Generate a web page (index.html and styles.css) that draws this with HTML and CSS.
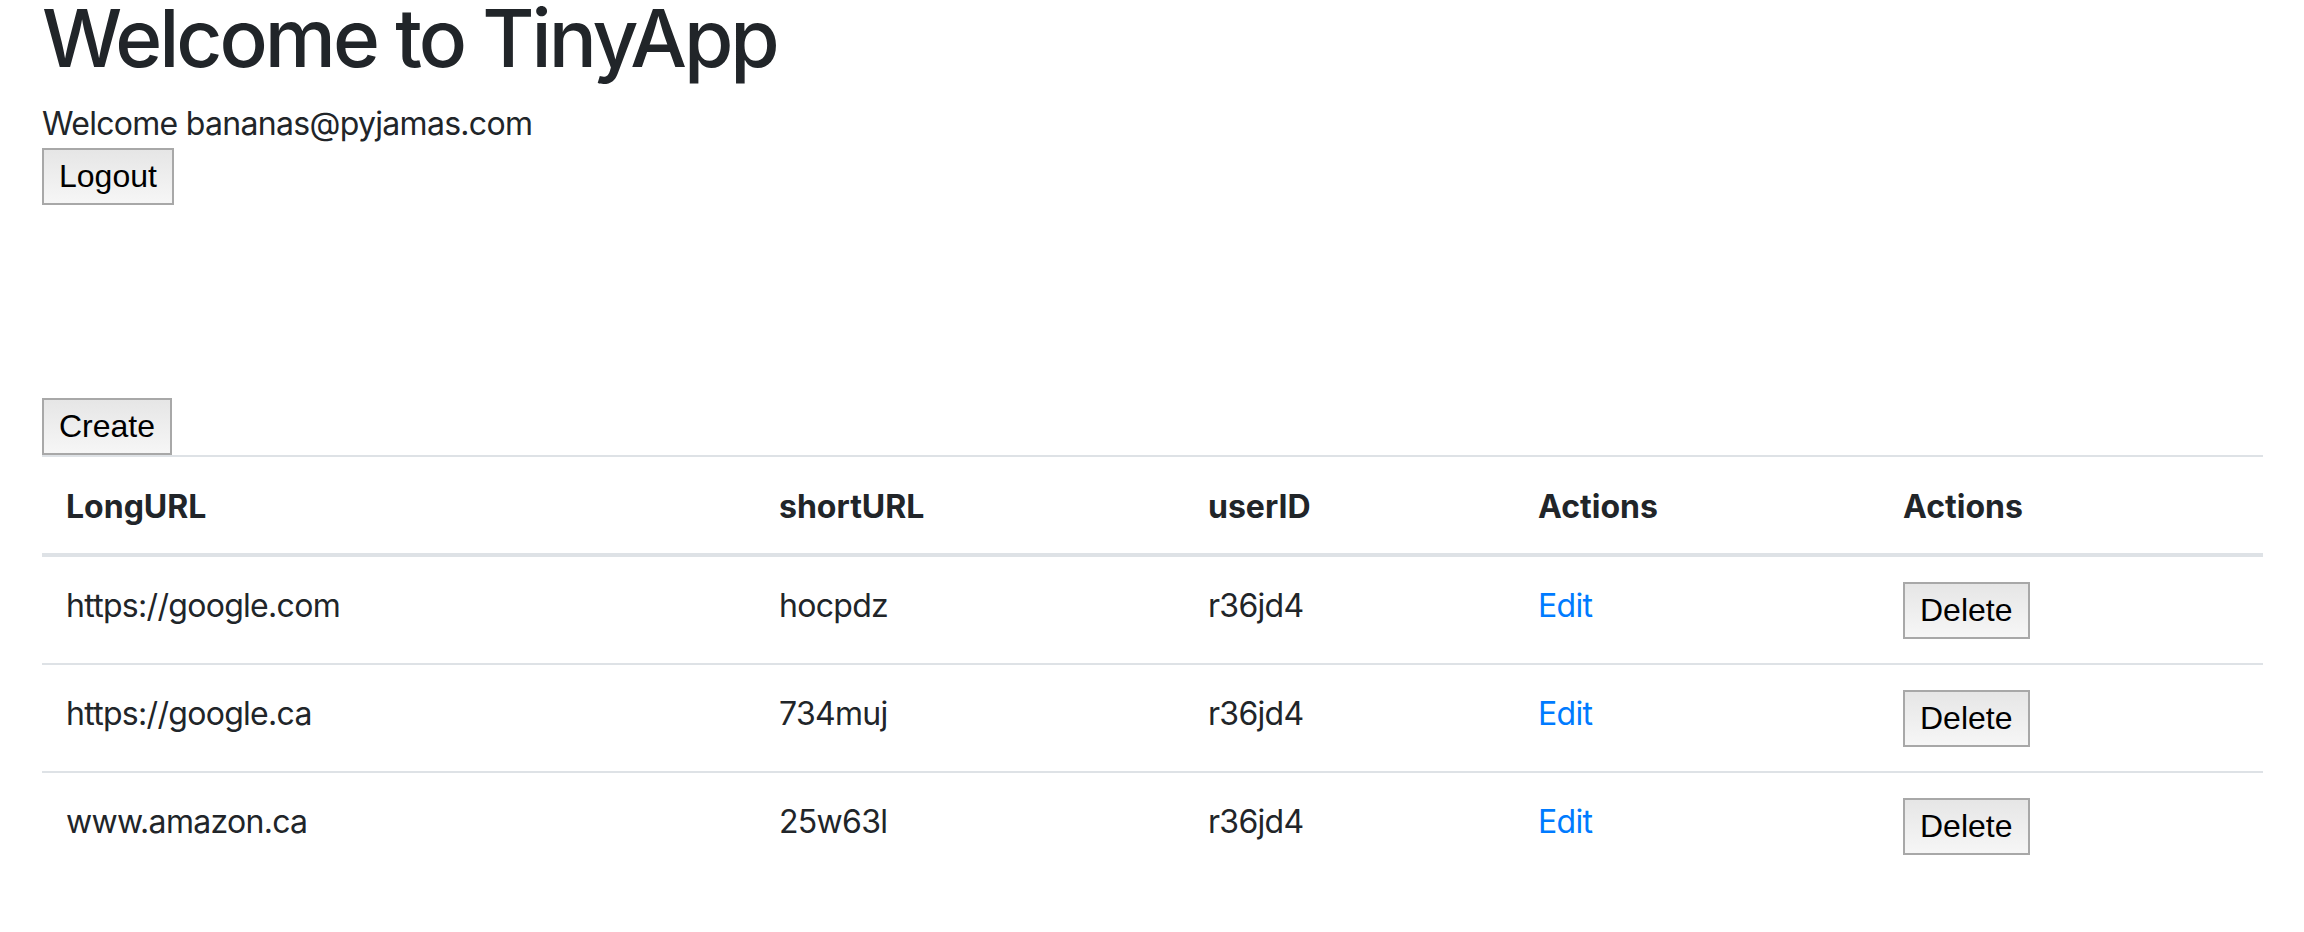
FILE: index.html
```html
<!DOCTYPE html>
<html lang="en">
<head>
<meta charset="utf-8">
<title>TinyApp</title>
<link rel="stylesheet" href="styles.css">
</head>
<body>
<main class="page">
  <h1 class="title">Welcome to TinyApp</h1>
  <div class="user">
    <div class="user-line">Welcome bananas@pyjamas.com</div>
    <button class="btn" type="button">Logout</button>
  </div>
  <div class="create">
    <button class="btn" type="button">Create</button>
  </div>
  <table class="urls">
    <colgroup>
      <col class="c-long">
      <col class="c-short">
      <col class="c-user">
      <col class="c-edit">
      <col class="c-del">
    </colgroup>
    <thead>
      <tr>
        <th>LongURL</th>
        <th>shortURL</th>
        <th>userID</th>
        <th>Actions</th>
        <th>Actions</th>
      </tr>
    </thead>
    <tbody>
      <tr>
        <td>https://google.com</td>
        <td>hocpdz</td>
        <td>r36jd4</td>
        <td><a class="link" href="#">Edit</a></td>
        <td><button class="btn" type="button">Delete</button></td>
      </tr>
      <tr>
        <td>https://google.ca</td>
        <td>734muj</td>
        <td>r36jd4</td>
        <td><a class="link" href="#">Edit</a></td>
        <td><button class="btn" type="button">Delete</button></td>
      </tr>
      <tr>
        <td>www.amazon.ca</td>
        <td>25w63l</td>
        <td>r36jd4</td>
        <td><a class="link" href="#">Edit</a></td>
        <td><button class="btn" type="button">Delete</button></td>
      </tr>
    </tbody>
  </table>
</main>
</body>
</html>
```
FILE: styles.css
```css
html, body {
  margin: 0;
  padding: 0;
  background: #ffffff;
}

body {
  font-family: Inter, "Noto Sans", sans-serif;
  font-size: 32px;
  line-height: 48px;
  letter-spacing: -0.7px;
  color: #212529;
}

.page {
  padding: 2px 41px 0 42px;
}

.title {
  margin: 0 0 26px;
  font-size: 80px;
  line-height: 72px;
  font-weight: 500;
  letter-spacing: -3px;
}

.user-line {
  height: 48px;
}

.btn {
  display: inline-block;
  margin: 0;
  padding: 2px 15px;
  border: 2px solid #a8a8a8;
  border-radius: 0;
  background: linear-gradient(#e6e6e6, #f6f6f6);
  font-family: "Liberation Sans", Arial, sans-serif;
  font-size: 32px;
  line-height: 49px;
  letter-spacing: 0;
  color: #000000;
}

.create {
  margin-top: 193px;
  line-height: 0;
}

.urls {
  width: 100%;
  border-collapse: collapse;
  table-layout: fixed;
}

.c-long { width: 713px; }
.c-short { width: 429px; }
.c-user { width: 330px; }
.c-edit { width: 365px; }

.urls th,
.urls td {
  padding: 25px 24px 24px;
  text-align: left;
  vertical-align: top;
  border-top: 2px solid #dee2e6;
}

.urls th {
  padding: 26px 24px 22px;
  font-weight: 700;
  letter-spacing: 0;
  border-bottom: 4px solid #dee2e6;
}

.link {
  color: #007bff;
  text-decoration: none;
}
```
